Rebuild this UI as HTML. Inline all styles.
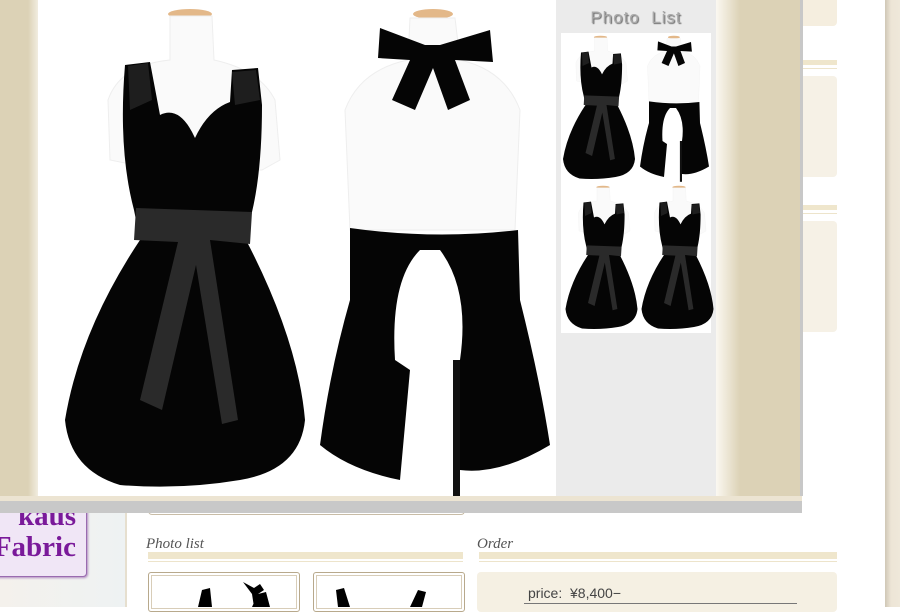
<!DOCTYPE html>
<html><head><meta charset="utf-8"><style>
*{margin:0;padding:0;box-sizing:border-box}
body{width:900px;height:607px;overflow:hidden;position:relative;background:#fff;font-family:"Liberation Sans",sans-serif}
.abs{position:absolute}
</style></head><body>
<div class="abs" style="left:0;top:0;width:126px;height:607px;background:linear-gradient(90deg,#f4f1ec,#eef2f3)"></div>
<div class="abs" style="left:125px;top:0;width:2px;height:607px;background:#e6dfcf"></div>
<div class="abs" style="left:885px;top:0;width:15px;height:607px;background:linear-gradient(90deg,#cfc7b6,#ede5d6 40%,#efe8da)"></div>
<div class="abs" style="left:790px;top:0;width:47px;height:26px;background:#f5eedf;border-radius:0 0 4px 4px"></div>
<div class="abs" style="left:790px;top:60px;width:47px;height:5px;background:#efe6cc"></div>
<div class="abs" style="left:790px;top:68px;width:47px;height:1px;background:#ede4cb"></div>
<div class="abs" style="left:790px;top:76px;width:47px;height:101px;background:#f6f1e6;border-radius:4px"></div>
<div class="abs" style="left:790px;top:205px;width:47px;height:5px;background:#efe6cc"></div>
<div class="abs" style="left:790px;top:213px;width:47px;height:1px;background:#ede4cb"></div>
<div class="abs" style="left:790px;top:221px;width:47px;height:111px;background:#f6f1e6;border-radius:4px"></div>
<div class="abs" style="left:-10px;top:498px;width:97px;height:79px;background:#f0e6f6;border:1px solid #9a6bb0;border-radius:4px;box-shadow:1px 1px 2px #b08ac0;font-family:'Liberation Serif',serif;font-weight:bold;font-size:29px;line-height:31px;color:#7a1a9a;padding:2px 0 0 0;text-align:right;padding-right:10px">kaus<br>Fabric</div>
<div class="abs" style="left:148px;top:498px;width:317px;height:17px;border:1px solid #c8bca6;border-top:none;border-radius:0 0 4px 4px"></div>
<div class="abs" style="left:146px;top:536px;font-family:'Liberation Serif',serif;font-style:italic;font-size:15px;color:#555">Photo list</div>
<div class="abs" style="left:148px;top:552px;width:315px;height:7px;background:#efe6cc"></div>
<div class="abs" style="left:148px;top:561px;width:315px;height:1px;background:#ede4cb"></div>
<div class="abs" style="left:477px;top:536px;font-family:'Liberation Serif',serif;font-style:italic;font-size:15px;color:#555">Order</div>
<div class="abs" style="left:479px;top:552px;width:358px;height:7px;background:#efe6cc"></div>
<div class="abs" style="left:479px;top:561px;width:358px;height:1px;background:#ede4cb"></div>
<div class="abs" style="left:148px;top:572px;width:152px;height:40px;border:1px solid #b8a98c;border-radius:3px;box-shadow:inset 0 0 0 2px #fff,inset 0 0 0 3px #d8cdb8;background:#fff"></div>
<div class="abs" style="left:313px;top:572px;width:152px;height:40px;border:1px solid #b8a98c;border-radius:3px;box-shadow:inset 0 0 0 2px #fff,inset 0 0 0 3px #d8cdb8;background:#fff"></div>
<svg class="abs" style="left:148px;top:572px" width="320" height="35">
<path d="M50,35 L54,18 L62,16 L64,35Z M104,35 L110,22 L118,20 L122,35Z M95,10 L106,16 L112,12 L116,18 L110,22 L112,35 L106,35 L104,22 Z" fill="#000"/>
<path d="M190,35 L188,18 L196,16 L202,35Z M262,35 L270,18 L278,20 L274,35Z" fill="#000"/>
</svg>
<div class="abs" style="left:477px;top:572px;width:360px;height:40px;background:#f5f0e3;border-radius:4px"></div>
<div class="abs" style="left:528px;top:585px;font-size:14px;color:#444">price:&nbsp; ¥8,400−</div>
<div class="abs" style="left:524px;top:603px;width:273px;height:1px;background:#777"></div>

<div class="abs" style="left:0;top:496px;width:802px;height:17px;background:#c8c8c8"></div>
<div class="abs" style="left:0;top:496px;width:802px;height:5px;background:#ece4d2"></div>
<div class="abs" style="left:0;top:0;width:802px;height:496px;background:#dcd2b6"></div>
<div class="abs" style="left:0;top:0;width:40px;height:496px;background:linear-gradient(90deg,#dcd2b6 70%,#f6f2e8)"></div>
<div class="abs" style="left:716px;top:0;width:24px;height:496px;background:linear-gradient(90deg,#fbf8f1,#dcd2b6)"></div>
<div class="abs" style="left:800px;top:0;width:3px;height:496px;background:#c8c8c8"></div>
<div class="abs" style="left:38px;top:0;width:518px;height:496px;background:#fff"></div>
<div class="abs" style="left:556px;top:0;width:160px;height:496px;background:#ebebeb"></div>
<div class="abs" style="left:556px;top:8px;width:160px;text-align:center;font-size:17px;color:#aaa;letter-spacing:1px;text-shadow:1px 1px 1px #666">Photo&nbsp; List</div>
<div class="abs" style="left:561px;top:33px;width:150px;height:300px;background:#fff"></div>
<svg class="abs" style="left:0;top:0" width="800" height="496">
<defs>
<g id="front">
<ellipse cx="190" cy="14" rx="22" ry="5" fill="#e3b889"/>
<path d="M170,16 L212,16 L214,60 Q260,70 275,100 L280,160 L262,170 L160,170 L110,160 L108,100 Q120,65 170,60Z" fill="#fafafa" stroke="#eee"/>
<path d="M125,65 L150,62 L160,115 Q180,105 195,138 Q208,110 230,102 L232,70 L258,68 L262,105 Q262,170 252,212 L246,240 Q298,340 305,420 Q300,470 240,480 Q180,490 120,485 Q70,470 65,420 Q80,330 140,240 L134,210 Q118,150 125,65Z" fill="#050505"/>
<path d="M128,66 L148,63 L152,100 L130,110Z M232,72 L256,70 L260,100 L235,105Z" fill="#1e1e1e"/>
<path d="M136,208 L252,212 L250,244 L210,240 L238,420 L222,424 L196,265 L162,410 L140,400 L178,242 L134,240Z" fill="#2a2a2a"/>
</g>
<g id="back">
<ellipse cx="433" cy="14" rx="20" ry="5" fill="#e3b889"/>
<path d="M410,18 L455,18 L460,60 Q505,70 520,110 L515,230 L350,230 L345,110 Q360,70 408,60Z" fill="#fafafa" stroke="#eee"/>
<path d="M380,28 L425,45 L440,45 L490,30 L493,62 L455,60 L470,100 L448,110 L433,68 L415,110 L392,100 L410,60 L378,58Z" fill="#050505"/>
<path d="M350,228 Q435,240 518,230 L520,300 Q540,380 550,445 Q500,475 460,470 L460,360 Q470,290 440,250 L420,250 Q390,280 395,360 L410,370 L400,480 Q350,470 320,445 Q330,370 350,300Z" fill="#050505"/>
<rect x="453" y="360" width="7" height="136" fill="#111"/>
</g>
</defs>
<use href="#front"/>
<use href="#back"/>
<use href="#front" transform="translate(543.5,33) scale(0.3)"/>
<use href="#back" transform="translate(544,33) scale(0.3)"/>
<use href="#front" transform="translate(546,183) scale(0.3)"/>
<use href="#front" transform="translate(622,183) scale(0.3)"/>
</svg>
</body></html>
